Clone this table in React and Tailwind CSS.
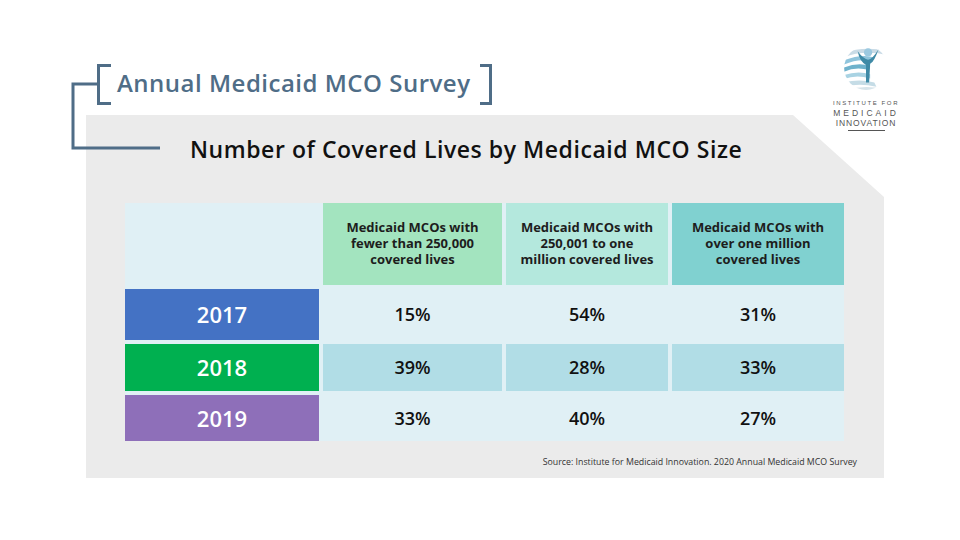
import React from "react";

const headers = [
  { text: ["Medicaid MCOs with", "fewer than 250,000", "covered lives"], bg: "bg-[#a3e4bf]" },
  { text: ["Medicaid MCOs with", "250,001 to one", "million covered lives"], bg: "bg-[#b4e8dd]" },
  { text: ["Medicaid MCOs with", "over one million", "covered lives"], bg: "bg-[#80d1d0]" },
];

const rows = [
  { year: "2017", yearBg: "bg-[#4472c4]", cellBg: "bg-[#e0f0f5]", values: ["15%", "54%", "31%"] },
  { year: "2018", yearBg: "bg-[#00b050]", cellBg: "bg-[#b1dde6]", values: ["39%", "28%", "33%"] },
  { year: "2019", yearBg: "bg-[#8e6fb9]", cellBg: "bg-[#e0f0f5]", values: ["33%", "40%", "27%"] },
];

const Logo = () => (
  <div className="absolute left-[834px] top-[43px] w-[64px] flex flex-col items-center">
    <svg width="46" height="50" viewBox="0 0 44 48">
      <defs>
        <clipPath id="ball">
          <circle cx="22" cy="24" r="21" />
        </clipPath>
      </defs>
      <g clipPath="url(#ball)">
        <path d="M0 10 Q20 2 44 8 L44 12 Q20 6 0 14 Z" fill="#c9dbe6" />
        <path d="M0 17 Q18 10 30 14 L28 18 Q16 14 0 21 Z" fill="#8fc4dc" />
        <path d="M0 24 Q14 18 26 22 L25 26 Q12 22 0 28 Z" fill="#6fb2cc" />
        <path d="M0 31 Q14 26 26 30 L26 34 Q12 30 0 35 Z" fill="#a9d3e3" />
        <path d="M0 38 Q16 34 30 38 L32 42 Q16 38 0 42 Z" fill="#c5dce6" />
        <path d="M4 45 Q20 40 38 44 L38 48 L4 48 Z" fill="#d7e4ea" />
      </g>
      <circle cx="24" cy="9" r="4" fill="#9cc9e0" />
      <path d="M14 8 Q20 16 24 16 Q28 16 34 6 Q30 18 26 20 L25 38 L22 38 L22 21 Q16 18 14 8 Z" fill="#3f8aa6" />
    </svg>
    <div className="mt-[6px] text-[6px] leading-[8px] tracking-[1.6px] text-[#555] font-['Liberation_Sans',sans-serif] whitespace-nowrap">
      INSTITUTE FOR
    </div>
    <div className="mt-[1px] text-[8.5px] leading-[10px] tracking-[3px] text-[#555] font-['Liberation_Sans',sans-serif] whitespace-nowrap">
      MEDICAID
    </div>
    <div className="text-[8.5px] leading-[10px] tracking-[0.9px] text-[#555] font-['Liberation_Sans',sans-serif] whitespace-nowrap">
      INNOVATION
    </div>
    <div className="mt-[2px] w-[37px] h-[1px] bg-[#555]" />
  </div>
);

export default function App() {
  return (
    <div className="relative w-[960px] h-[540px] bg-white overflow-hidden font-['Open_Sans',sans-serif]">
      {/* Title with brackets */}
      <div className="flex items-start pl-[97px] pt-[64px] h-[115px]">
        <div className="w-[14px] h-[41px] border-l-[3px] border-t-[3px] border-b-[3px] border-[#4f6d87]" />
        <div className="ml-[6px] mt-[3px] text-[24px] leading-[32px] font-semibold text-[#4f6d87] tracking-[0.5px]">
          Annual Medicaid MCO Survey
        </div>
        <div className="ml-[10px] w-[12px] h-[41px] border-r-[3px] border-t-[3px] border-b-[3px] border-[#4f6d87]" />
      </div>

      {/* Gray panel */}
      <div className="ml-[86px] w-[798px] h-[363px] bg-[#ebebeb] [clip-path:polygon(0_0,707px_0,100%_82px,100%_100%,0_100%)] flex flex-col">
        <div className="pl-[104px] pt-[19px] text-[23px] leading-[31px] font-semibold text-[#111] tracking-[0.55px]">
          Number of Covered Lives by Medicaid MCO Size
        </div>

        <div className="ml-[39px] mt-[38px] w-[719px] grid grid-cols-[194px_179px_162px_172px] grid-rows-[82px_51px_47px_46px] gap-[4px] bg-[#e0f0f5]">
          <div />
          {headers.map((h) => (
            <div
              key={h.text[1]}
              className={`${h.bg} flex flex-col items-center justify-center text-[13px] leading-[16px] font-bold text-[#1d1d1d] pb-[2px]`}
            >
              {h.text.map((t) => (
                <span key={t}>{t}</span>
              ))}
            </div>
          ))}
          {rows.map((r) => (
            <React.Fragment key={r.year}>
              <div className={`${r.yearBg} flex items-center justify-center text-[22px] font-semibold text-white`}>
                {r.year}
              </div>
              {r.values.map((v, i) => (
                <div
                  key={i}
                  className={`${r.cellBg} flex items-center justify-center text-[18px] font-semibold text-[#111]`}
                >
                  {v}
                </div>
              ))}
            </React.Fragment>
          ))}
        </div>

        <div className="mt-auto mb-[11px] pr-[27px] text-right text-[8.8px] leading-[10px] text-[#333]">
          Source: Institute for Medicaid Innovation. 2020 Annual Medicaid MCO Survey
        </div>
      </div>

      {/* Connector line from bracket to panel */}
      <svg className="absolute left-0 top-0 pointer-events-none" width="200" height="160">
        <polyline points="98,84 73,84 73,148 160,148" fill="none" stroke="#4f6d87" strokeWidth="3" />
      </svg>

      <Logo />
    </div>
  );
}
